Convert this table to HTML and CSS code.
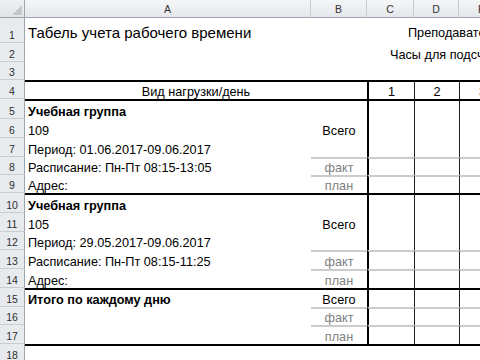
FILE: index.html
```html
<!DOCTYPE html>
<html lang="ru">
<head>
<meta charset="utf-8">
<title>Табель учета рабочего времени</title>
<link rel="stylesheet" href="styles.css">
</head>
<body>
<div class="sheet">
  <div class="row hdr">
    <div class="corner"><svg width="12" height="12" viewBox="0 0 12 12"><polygon points="11,1 11,11 1,11" fill="#c3c7cc"/></svg></div>
    <div class="ch">A</div>
    <div class="ch">B</div>
    <div class="ch">C</div>
    <div class="ch">D</div>
    <div class="ch">E</div>
  </div>

  <div class="row h25">
    <div class="rh">1</div>
    <div class="title">Табель учета рабочего времени</div>
    <div></div>
    <div class="span3 info1">Преподаватель: </div>
  </div>
  <div class="row">
    <div class="rh">2</div>
    <div></div>
    <div></div>
    <div class="span3 info2">Часы для подсчета</div>
  </div>
  <div class="row h18">
    <div class="rh">3</div>
    <div></div><div></div><div></div><div></div><div></div>
  </div>

  <div class="row">
    <div class="rh">4</div>
    <div class="span2 top2 center">Вид нагрузки/день</div>
    <div class="top2 l2 center">1</div>
    <div class="top2 l1 center">2</div>
    <div class="top2 l1 center">3</div>
  </div>

  <div class="row h20">
    <div class="rh">5</div>
    <div class="top2 bold">Учебная группа</div>
    <div class="top2"></div>
    <div class="top2 l2"></div>
    <div class="top2 l1"></div>
    <div class="top2 l1"></div>
  </div>
  <div class="row">
    <div class="rh">6</div>
    <div>109</div>
    <div class="center">Всего</div>
    <div class="l2"></div><div class="l1"></div><div class="l1"></div>
  </div>
  <div class="row">
    <div class="rh">7</div>
    <div>Период: 01.06.2017-09.06.2017</div>
    <div></div>
    <div class="l2"></div><div class="l1"></div><div class="l1"></div>
  </div>
  <div class="row h18">
    <div class="rh">8</div>
    <div>Расписание: Пн-Пт 08:15-13:05</div>
    <div class="tg center muted">факт</div>
    <div class="tg l2"></div><div class="tg l1"></div><div class="tg l1"></div>
  </div>
  <div class="row h18">
    <div class="rh">9</div>
    <div>Адрес:</div>
    <div class="tg center muted">план</div>
    <div class="tg l2"></div><div class="tg l1"></div><div class="tg l1"></div>
  </div>

  <div class="row h20">
    <div class="rh">10</div>
    <div class="top2 bold">Учебная группа</div>
    <div class="top2"></div>
    <div class="top2 l2"></div>
    <div class="top2 l1"></div>
    <div class="top2 l1"></div>
  </div>
  <div class="row">
    <div class="rh">11</div>
    <div>105</div>
    <div class="center">Всего</div>
    <div class="l2"></div><div class="l1"></div><div class="l1"></div>
  </div>
  <div class="row h18">
    <div class="rh">12</div>
    <div>Период: 29.05.2017-09.06.2017</div>
    <div></div>
    <div class="l2"></div><div class="l1"></div><div class="l1"></div>
  </div>
  <div class="row">
    <div class="rh">13</div>
    <div>Расписание: Пн-Пт 08:15-11:25</div>
    <div class="tg center muted">факт</div>
    <div class="tg l2"></div><div class="tg l1"></div><div class="tg l1"></div>
  </div>
  <div class="row">
    <div class="rh">14</div>
    <div>Адрес:</div>
    <div class="tg center muted">план</div>
    <div class="tg l2"></div><div class="tg l1"></div><div class="tg l1"></div>
  </div>

  <div class="row">
    <div class="rh">15</div>
    <div class="top2 bold">Итого по каждому дню</div>
    <div class="top2 center">Всего</div>
    <div class="top2 l2"></div>
    <div class="top2 l1"></div>
    <div class="top2 l1"></div>
  </div>
  <div class="row h18">
    <div class="rh">16</div>
    <div></div>
    <div class="tg center muted">факт</div>
    <div class="tg l2"></div><div class="tg l1"></div><div class="tg l1"></div>
  </div>
  <div class="row">
    <div class="rh">17</div>
    <div></div>
    <div class="tg center muted">план</div>
    <div class="tg l2"></div><div class="tg l1"></div><div class="tg l1"></div>
  </div>
  <div class="row">
    <div class="rh">18</div>
    <div class="top2"></div>
    <div class="top2"></div>
    <div class="top2"></div>
    <div class="top2"></div>
    <div class="top2"></div>
  </div>
</div>
</body>
</html>
```

FILE: styles.css
```css
html, body {
  margin: 0;
  padding: 0;
  background: #ffffff;
}
body {
  width: 480px;
  height: 360px;
  overflow: hidden;
  font-family: "Liberation Sans", Arial, sans-serif;
  color: #000000;
}
.sheet {
  width: 480px;
  height: 360px;
  overflow: hidden;
}
.row {
  display: grid;
  grid-template-columns: 25px 286px 56px 47px 45px 46px;
  height: 19px;
}
.row.h18 { height: 18px; }
.row.h20 { height: 20px; }
.row.h25 { height: 25px; }
.row.hdr { height: 18px; }

.row > div {
  box-sizing: border-box;
  display: flex;
  align-items: flex-end;
  min-width: 0;
  white-space: nowrap;
  font-size: 12.7px;
  line-height: 14px;
  padding: 0 3px 0.5px;
}

.hdr > div {
  background: linear-gradient(#f5f6f8, #e4e7eb);
  border-right: 1px solid #c9cdd2;
  border-bottom: 1px solid #9ea4ab;
  justify-content: center;
  font-size: 10.5px;
  line-height: 12px;
  color: #333333;
  padding: 0 0 2px;
}
.hdr > .corner {
  border-right: 1px solid #9ea4ab;
  padding: 0 1px 1px 0;
  justify-content: flex-end;
  background: linear-gradient(#eef0f2, #e2e5e8);
}
.corner svg { display: block; }

.row > .rh {
  background: #e8ebee;
  border-right: 1px solid #9ea4ab;
  border-bottom: 1px solid #c9cdd2;
  justify-content: center;
  font-size: 10.5px;
  line-height: 12px;
  color: #2e2e2e;
  padding: 0 0 1.5px;
}

.row > .title {
  font-size: 15px;
  line-height: 17px;
  padding-bottom: 2px;
  overflow: visible;
}
.span2 { grid-column: span 2; }
.span3 { grid-column: span 3; }
.row > .info1 {
  padding-left: 41px;
  padding-bottom: 3px;
  overflow: hidden;
}
.row > .info2 {
  padding-left: 23px;
  overflow: hidden;
}
.row > .center { justify-content: center; }
.bold { font-weight: bold; }
.muted { color: #7f7f7f; }

.top2 { border-top: 2px solid #000000; }
.tg { border-top: 2px solid #cccccc; }
.l2 { border-left: 2px solid #000000; }
.l1 { border-left: 1px solid #1e1e1e; }
```
